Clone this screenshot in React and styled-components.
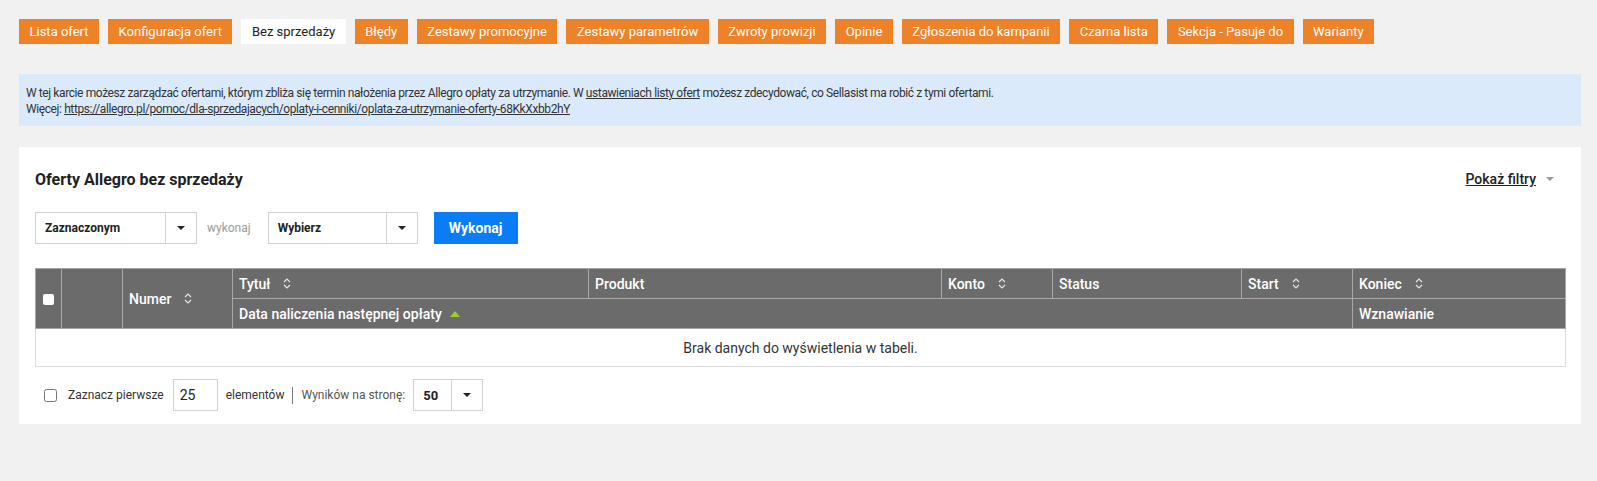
import React from 'react'
import styled, { createGlobalStyle } from 'styled-components'

const GlobalStyle = createGlobalStyle`
  body {
    margin: 0;
    background: #f1f1f1;
    font-family: Roboto, "Liberation Sans", sans-serif;
    color: #333;
  }
`;

const Page = styled.div`
  padding: 19px 16px 40px 19px;
`;

const TabBar = styled.nav`
  display: flex;
  flex-wrap: wrap;
  gap: 9px;
`;

const Tab = styled.a`
  display: block;
  height: 25px;
  line-height: 25px;
  padding: 0 10.5px;
  font-size: 13px;
  color: ${p => (p.active ? '#222' : '#fff')};
  background: ${p => (p.active ? '#fff' : '#ee8228')};
  text-decoration: none;
  white-space: nowrap;
`;

const InfoBox = styled.div`
  margin-top: 30px;
  padding: 11px 7px 9px;
  background: #dbeafb;
  font-family: Roboto, sans-serif;
  font-size: 12px;
  letter-spacing: -0.4px;
  line-height: 16px;
  color: #333;
`;

const InfoLink = styled.a`
  color: #333;
  text-decoration: underline;
`;

const Panel = styled.section`
  margin-top: 21px;
  background: #fff;
  padding: 16px 16px 13px;
`;

const PanelHead = styled.div`
  display: flex;
  align-items: center;
  justify-content: space-between;
  height: 32px;
`;

const PanelTitle = styled.h2`
  margin: 0;
  font-size: 16px;
  font-weight: 700;
  color: #222;
`;

const FilterToggle = styled.a`
  display: flex;
  align-items: center;
  gap: 10px;
  margin-right: 11px;
  font-size: 14px;
  font-weight: 500;
  color: #222;
  span {
    text-decoration: underline;
  }
`;

const Caret = styled.i`
  display: inline-block;
  width: 0;
  height: 0;
  border-left: 4px solid transparent;
  border-right: 4px solid transparent;
  border-top: 4px solid ${p => p.color || '#222'};
`;

const ActionRow = styled.div`
  display: flex;
  align-items: center;
  margin-top: 17px;
`;

const Select = styled.div`
  display: flex;
  width: ${p => p.width}px;
  height: 32px;
  box-sizing: border-box;
  border: 1px solid #d2d2d2;
  background: #fff;
`;

const SelectValue = styled.div`
  flex: 1;
  display: flex;
  align-items: center;
  padding-left: ${p => p.pad || 9}px;
  font-size: ${p => p.size || 12}px;
  font-weight: 700;
  color: #222;
`;

const SelectArrow = styled.div`
  width: 30px;
  display: flex;
  align-items: center;
  justify-content: center;
  border-left: 1px solid #d2d2d2;
`;

const Muted = styled.span`
  margin: 0 17px 0 10px;
  font-size: 12px;
  color: #999;
`;

const PrimaryButton = styled.button`
  margin-left: 16px;
  width: 84px;
  height: 32px;
  border: 0;
  background: #0a7cf5;
  color: #fff;
  font-family: Roboto, sans-serif;
  font-size: 14px;
  font-weight: 700;
`;

const Table = styled.table`
  width: 100%;
  margin-top: 24px;
  border-collapse: collapse;
  table-layout: fixed;
  border: 1px solid #dcdcdc;
`;

const Th = styled.th`
  height: 29px;
  padding: 0 6px;
  background: #6b6b6b;
  border: 1px solid #a8a8a8;
  color: #fff;
  font-size: 14px;
  font-weight: 500;
  text-align: left;
  white-space: nowrap;
  ${p => p.center && 'text-align: center;'}
`;

const HeadLabel = styled.span`
  display: inline-flex;
  align-items: center;
  gap: ${p => p.gap || 13}px;
`;

const HeadCheck = styled.span`
  display: inline-block;
  width: 11px;
  height: 11px;
  border-radius: 2px;
  background: #fff;
  vertical-align: middle;
`;

const EmptyCell = styled.td`
  height: 35px;
  text-align: center;
  font-size: 14px;
  color: #333;
`;

const Footer = styled.div`
  display: flex;
  align-items: center;
  margin-top: 12px;
  padding-left: 8px;
  font-size: 12px;
  color: #333;
`;

const Checkbox = styled.input`
  margin: 0 11px 0 1px;
  width: 13px;
  height: 13px;
`;

const NumberInput = styled.div`
  display: flex;
  align-items: center;
  width: 45px;
  height: 32px;
  box-sizing: border-box;
  margin: 0 8px 0 9px;
  padding-left: 6px;
  border: 1px solid #d2d2d2;
  font-size: 14px;
  color: #222;
`;

const Separator = styled.span`
  width: 1px;
  height: 17px;
  margin: 0 8px;
  background: #777;
`;

const FooterLabel = styled.span`
  color: ${p => p.dim ? '#555' : '#333'};
  margin-right: ${p => p.gap || 0}px;
`;

const SortIcon = () => (
  <svg width="8" height="11" viewBox="0 0 8 11" fill="none" stroke="#e6e6e6" strokeWidth="1.2">
    <polyline points="1,4 4,1 7,4" />
    <polyline points="1,7 4,10 7,7" />
  </svg>
);

const AscIcon = () => (
  <svg width="10" height="6" viewBox="0 0 10 6">
    <polygon points="0,6 5,0 10,6" fill="#9acd32" />
  </svg>
);

const tabs = [
  'Lista ofert', 'Konfiguracja ofert', 'Bez sprzedaży', 'Błędy', 'Zestawy promocyjne',
  'Zestawy parametrów', 'Zwroty prowizji', 'Opinie', 'Zgłoszenia do kampanii',
  'Czarna lista', 'Sekcja - Pasuje do', 'Warianty',
];

const cols = [26, 61, 110, 356, 353, 111, 189, 111, 213];

const App = () => (
  <>
    <GlobalStyle />
    <Page>
      <TabBar>
        {tabs.map(t => (
          <Tab key={t} active={t === 'Bez sprzedaży'}>{t}</Tab>
        ))}
      </TabBar>

      <InfoBox>
        W tej karcie możesz zarządzać ofertami, którym zbliża się termin nałożenia przez Allegro opłaty za utrzymanie. W <InfoLink>ustawieniach listy ofert</InfoLink> możesz zdecydować, co Sellasist ma robić z tymi ofertami.
        <br />
        Więcej: <InfoLink>https://allegro.pl/pomoc/dla-sprzedajacych/oplaty-i-cenniki/oplata-za-utrzymanie-oferty-68KkXxbb2hY</InfoLink>
      </InfoBox>

      <Panel>
        <PanelHead>
          <PanelTitle>Oferty Allegro bez sprzedaży</PanelTitle>
          <FilterToggle>
            <span>Pokaż filtry</span>
            <Caret color="#999" />
          </FilterToggle>
        </PanelHead>

        <ActionRow>
          <Select width={162}>
            <SelectValue>Zaznaczonym</SelectValue>
            <SelectArrow><Caret /></SelectArrow>
          </Select>
          <Muted>wykonaj</Muted>
          <Select width={150}>
            <SelectValue>Wybierz</SelectValue>
            <SelectArrow><Caret /></SelectArrow>
          </Select>
          <PrimaryButton>Wykonaj</PrimaryButton>
        </ActionRow>

        <Table>
          <colgroup>
            {cols.map((w, i) => <col key={i} style={{ width: w }} />)}
          </colgroup>
          <thead>
            <tr>
              <Th rowSpan={2} center><HeadCheck /></Th>
              <Th rowSpan={2} />
              <Th rowSpan={2}><HeadLabel>Numer <SortIcon /></HeadLabel></Th>
              <Th><HeadLabel>Tytuł <SortIcon /></HeadLabel></Th>
              <Th>Produkt</Th>
              <Th><HeadLabel>Konto <SortIcon /></HeadLabel></Th>
              <Th>Status</Th>
              <Th><HeadLabel>Start <SortIcon /></HeadLabel></Th>
              <Th><HeadLabel>Koniec <SortIcon /></HeadLabel></Th>
            </tr>
            <tr>
              <Th colSpan={5}><HeadLabel gap={8}>Data naliczenia następnej opłaty <AscIcon /></HeadLabel></Th>
              <Th>Wznawianie</Th>
            </tr>
          </thead>
          <tbody>
            <tr>
              <EmptyCell colSpan={9}>Brak danych do wyświetlenia w tabeli.</EmptyCell>
            </tr>
          </tbody>
        </Table>

        <Footer>
          <Checkbox type="checkbox" />
          <FooterLabel>Zaznacz pierwsze</FooterLabel>
          <NumberInput>25</NumberInput>
          <FooterLabel>elementów</FooterLabel>
          <Separator />
          <FooterLabel dim gap={8}>Wyników na stronę:</FooterLabel>
          <Select width={70}>
            <SelectValue size={13}>50</SelectValue>
            <SelectArrow><Caret /></SelectArrow>
          </Select>
        </Footer>
      </Panel>
    </Page>
  </>
);

export default App
